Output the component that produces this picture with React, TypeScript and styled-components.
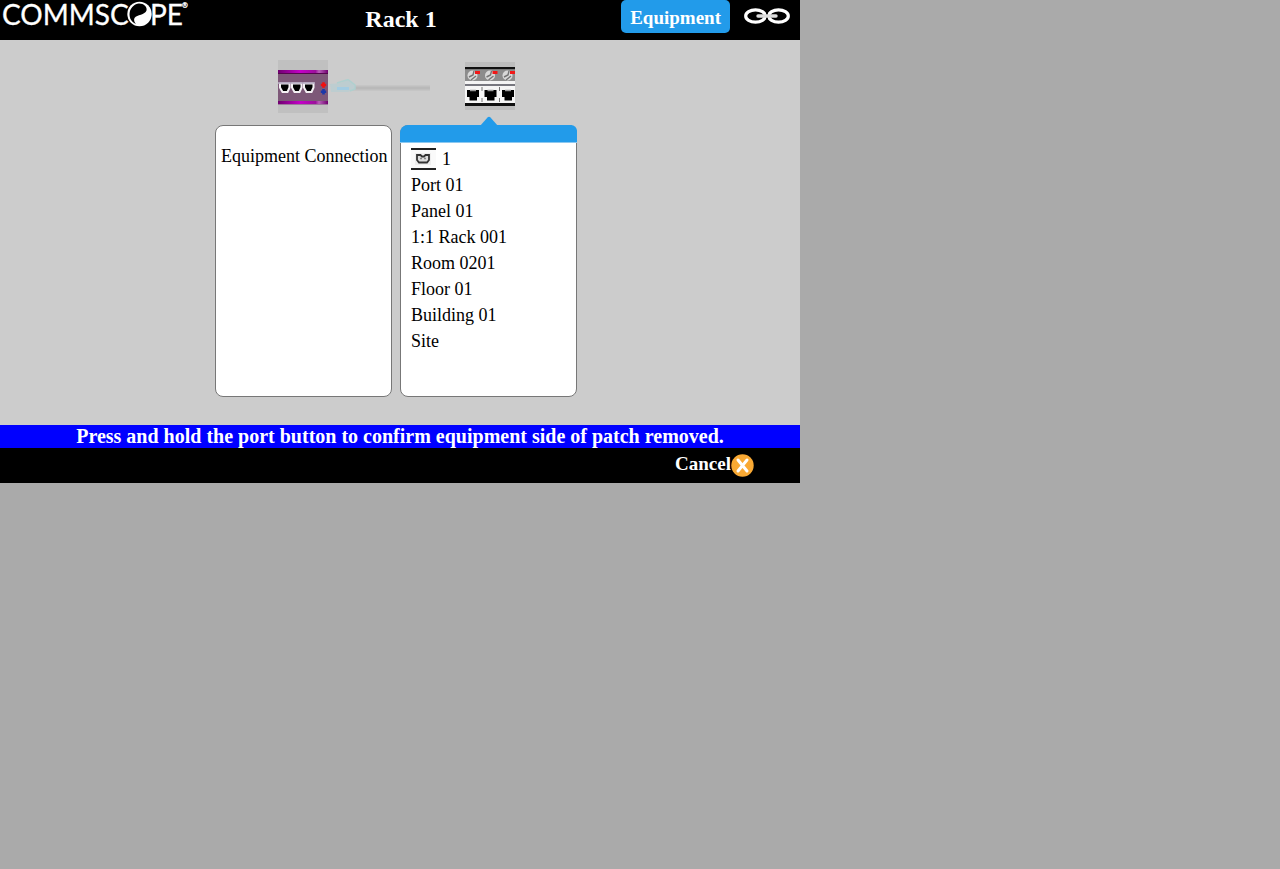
import React from "react";
import styled, { createGlobalStyle } from "styled-components";

const GlobalStyle = createGlobalStyle`
  * { box-sizing: border-box; }
  body {
    margin: 0;
    background: #aaa;
    color: #000;
    font-family: "Liberation Serif", "Times New Roman", serif;
    font-size: 18px;
  }
`;

const Screen = styled.div`
  max-width: 800px;
  background: #ccc;
`;

const Header = styled.header`
  display: grid;
  grid-template-columns: 1fr auto 1fr;
  align-items: start;
  min-height: 40px;
  background: #000;
  color: #fff;
`;

const Title = styled.h1`
  margin: 0;
  padding: 5px 0 0 2px;
  font-size: 24px;
  line-height: 28px;
`;

const HeaderActions = styled.div`
  display: flex;
  justify-content: flex-end;
  gap: 14px;
  padding-right: 10px;
`;

const EquipmentButton = styled.button`
  height: 33px;
  padding: 2px 9px 0;
  border: 0;
  border-radius: 5px;
  background: #229bea;
  color: #fff;
  font: bold 19px/22px "Liberation Serif", "Times New Roman", serif;
`;

const IconButton = styled.button`
  display: flex;
  padding: 7px 0 0;
  border: 0;
  background: none;
`;

const Main = styled.main`
  padding: 20px 0 28px;
`;

const Circuit = styled.div`
  display: flex;
  justify-content: center;
  padding-right: 7px;
  margin-bottom: 12px;
`;

const Cards = styled.div`
  display: flex;
  justify-content: center;
  gap: 8px;
  padding-right: 8px;
`;

const Card = styled.section`
  position: relative;
  width: 177px;
  min-height: 272px;
  border: 1px solid #777;
  border-radius: 8px;
  background: #fff;
`;

const CardTitle = styled.h2`
  margin: 0;
  padding: 19px 0 0 5px;
  font-size: 18px;
  font-weight: normal;
  line-height: 22px;
  white-space: nowrap;
`;

const CardBand = styled.div`
  height: 18px;
  margin: -1px -1px 0;
  border-bottom: 1px solid #8cc8f0;
  border-radius: 8px 6px 0 0;
  background: #229bea;
`;

const Pointer = styled.svg`
  position: absolute;
  top: -10px;
  left: 50%;
  margin-left: -9px;
`;

const Path = styled.ul`
  margin: 0;
  padding: 3px 10px;
  list-style: none;
`;

const PathItem = styled.li`
  display: flex;
  align-items: center;
  gap: 6px;
  height: 26px;
  line-height: 26px;
`;

const Message = styled.p`
  margin: 0;
  background: #00f;
  color: #fff;
  font-size: 20px;
  font-weight: bold;
  line-height: 23px;
  text-align: center;
`;

const Footer = styled.footer`
  display: flex;
  justify-content: flex-end;
  height: 35px;
  padding-right: 46px;
  background: #000;
`;

const CancelButton = styled.button`
  display: flex;
  align-items: center;
  padding: 0;
  border: 0;
  background: none;
  color: #fff;
  font: bold 19px/22px "Liberation Serif", "Times New Roman", serif;
`;

const CancelLabel = styled.span`
  padding-bottom: 4px;
`;

function Logo() {
  return (
    <svg width="190" height="30" viewBox="0 0 190 30" overflow="visible" role="img" aria-label="CommScope">
      <g fill="#fff" stroke="#fff" strokeWidth=".3" fontFamily="Lato, sans-serif" fontSize="28">
        <text x="2" y="25">COMMSC</text>
        <text x="150" y="25">PE</text>
        <text x="182" y="8" fontSize="7">®</text>
      </g>
      <circle cx="139.5" cy="14" r="12.2" fill="#fff" />
      <path d="M139 3.5C144 3.5 147.5 7 146.5 10.5C145 15 137 14.5 134.5 18C133.5 20 134.5 22.5 136 24C130.5 22 128.5 16 130 11C131.5 7 134.5 4 139 3.5Z" fill="#000" />
    </svg>
  );
}

function ChainIcon() {
  return (
    <svg width="46" height="18" viewBox="0 0 46 18" fill="none" aria-hidden="true">
      <g stroke="#fff" strokeWidth="3.2">
        <ellipse cx="11.5" cy="9" rx="9.8" ry="6.2" />
        <ellipse cx="34.5" cy="9" rx="9.8" ry="6.2" />
      </g>
      <path d="M23 2V16" stroke="#000" strokeWidth="1.5" />
      <path d="M14 9H32" stroke="#ddd" strokeWidth="3.4" strokeLinecap="round" />
    </svg>
  );
}

function SwitchPicture() {
  return (
    <svg width="50" height="53" viewBox="0 0 50 53" aria-hidden="true">
      <defs>
        <linearGradient id="magenta">
          <stop offset="0" stopColor="#700070" />
          <stop offset=".45" stopColor="#c400c8" />
          <stop offset=".75" stopColor="#9c109c" />
          <stop offset=".82" stopColor="#b860b8" />
          <stop offset="1" stopColor="#700070" />
        </linearGradient>
      </defs>
      <rect width="50" height="53" fill="#c0c0c0" />
      <rect y="10" width="50" height="35" fill="#7d5878" />
      <rect y="10" width="50" height="3" fill="url(#magenta)" />
      <rect y="13" width="50" height="1" fill="#55054f" />
      <rect y="41" width="50" height="3" fill="url(#magenta)" />
      <rect y="44" width="50" height="1" fill="#9d7a9d" />
      {[2, 14, 26].map((x) => (
        <path key={x} d={`M${x} 23.5H${x + 9.5}V27.5L${x + 7.5} 32H${x + 2.5}L${x} 27.5Z`} fill="#000" stroke="#f4f0f4" strokeWidth="2" strokeLinejoin="round" />
      ))}
      <path d="M0 23H37" stroke="#b7acc4" strokeWidth="1.5" />
      <path d="M45.5 22.3v5.4M42.8 25h5.4" stroke="#f01010" strokeWidth="2.6" />
      <path d="M45.5 29v5.4M42.8 31.7h5.4" stroke="#1c38a8" strokeWidth="2.6" />
    </svg>
  );
}

function CablePicture() {
  return (
    <svg width="137" height="53" viewBox="0 0 137 53" aria-hidden="true">
      <rect x="24" y="25" width="78" height="6" fill="#c5c5c5" />
      <rect x="24" y="26.5" width="78" height="3" fill="#b9b9b9" />
      <path d="M2 24L13 23L20 19L27 24V29L20 32L3 32Z" fill="#bdcdd0" />
      <path d="M9 23L20 19.5L27 25V29L22 31" fill="none" stroke="#afd0cf" strokeWidth="1.5" />
      <path d="M9 28.5H21" stroke="#a3cce2" strokeWidth="3" />
    </svg>
  );
}

function PanelPicture() {
  return (
    <svg width="50" height="53" viewBox="0 0 50 53" aria-hidden="true">
      <rect y="2" width="50" height="48" fill="#bdbdbd" />
      <rect y="7" width="50" height="2.5" fill="#111" />
      <rect y="9.5" width="50" height="13" fill="#8c8c8c" />
      <rect y="21" width="50" height="3" fill="#f4f4f4" />
      <rect y="24" width="50" height="2" fill="#77777f" />
      <rect y="26" width="50" height="17" fill="#f6f6f6" />
      <rect y="43" width="50" height="3" fill="#111" />
      {[0, 17.5, 35].map((x) => (
        <g key={x}>
          <circle cx={x + 7.5} cy="15.5" r="5" fill="#d8d8d8" />
          <path d={`M${x + 4} 17L${x + 8} 15L${x + 9} 11M${x + 6} 20L${x + 11} 16`} fill="none" stroke="#747474" strokeWidth="1.4" />
          <rect x={x + 10} y="11" width="5" height="3" fill="#f01818" />
          <path d={`M${x + 2} 30H${x + 14}V37H${x + 12}V40.5H${x + 4.5}V37H${x + 2}Z`} fill="#000" />
          <path d={`M${x + 5} 30.5H${x + 11}`} stroke="#999" strokeWidth="1.5" />
        </g>
      ))}
      <path d="M17 27V31M34.5 27V31M17 38V42M34.5 38V42" stroke="#777" />
    </svg>
  );
}

function PortIcon() {
  return (
    <svg width="25" height="22" viewBox="0 0 25 22" aria-hidden="true">
      <rect width="25" height="22" fill="#fafafa" />
      <rect width="25" height="2" fill="#222" />
      <rect y="20" width="25" height="2" fill="#222" />
      <rect x="4" y="5" width="16" height="12" fill="#eee" />
      <path d="M6 7H9.5L11 8.5H13L14.5 7H18V12L16 14.5H8L6 12Z" fill="#ddd" stroke="#333" strokeWidth="1.8" />
      <path d="M9.5 10.5H10.5M13.5 10.5H14.5" stroke="#333" strokeWidth="1.5" />
    </svg>
  );
}

function CancelIcon() {
  return (
    <svg width="23" height="23" viewBox="0 0 23 23" aria-hidden="true">
      <circle cx="11.5" cy="11.5" r="11.2" fill="#f9a934" />
      <path d="M7 6L16 17M16 6L7 17" stroke="#fff" strokeWidth="3" strokeLinecap="round" />
    </svg>
  );
}

const location = ["Port 01", "Panel 01", "1:1 Rack 001", "Room 0201", "Floor 01", "Building 01", "Site"];

export default function App() {
  return (
    <>
      <GlobalStyle />
      <Screen>
        <Header>
          <Logo />
          <Title>Rack 1</Title>
          <HeaderActions>
            <EquipmentButton type="button">Equipment</EquipmentButton>
            <IconButton type="button" aria-label="Connections">
              <ChainIcon />
            </IconButton>
          </HeaderActions>
        </Header>
        <Main>
          <Circuit>
            <SwitchPicture />
            <CablePicture />
            <PanelPicture />
          </Circuit>
          <Cards>
            <Card>
              <CardTitle>Equipment Connection</CardTitle>
            </Card>
            <Card>
              <CardBand />
              <Pointer width="18" height="10" viewBox="0 0 18 10" aria-hidden="true">
                <path d="M0 10L7.5 1.5Q9 0 10.5 1.5L18 10Z" fill="#229bea" />
              </Pointer>
              <Path>
                <PathItem>
                  <PortIcon />
                  <span>1</span>
                </PathItem>
                {location.map((name) => (
                  <PathItem key={name}>{name}</PathItem>
                ))}
              </Path>
            </Card>
          </Cards>
        </Main>
        <Message role="status">Press and hold the port button to confirm equipment side of patch removed.</Message>
        <Footer>
          <CancelButton type="button">
            <CancelLabel>Cancel</CancelLabel>
            <CancelIcon />
          </CancelButton>
        </Footer>
      </Screen>
    </>
  );
}
